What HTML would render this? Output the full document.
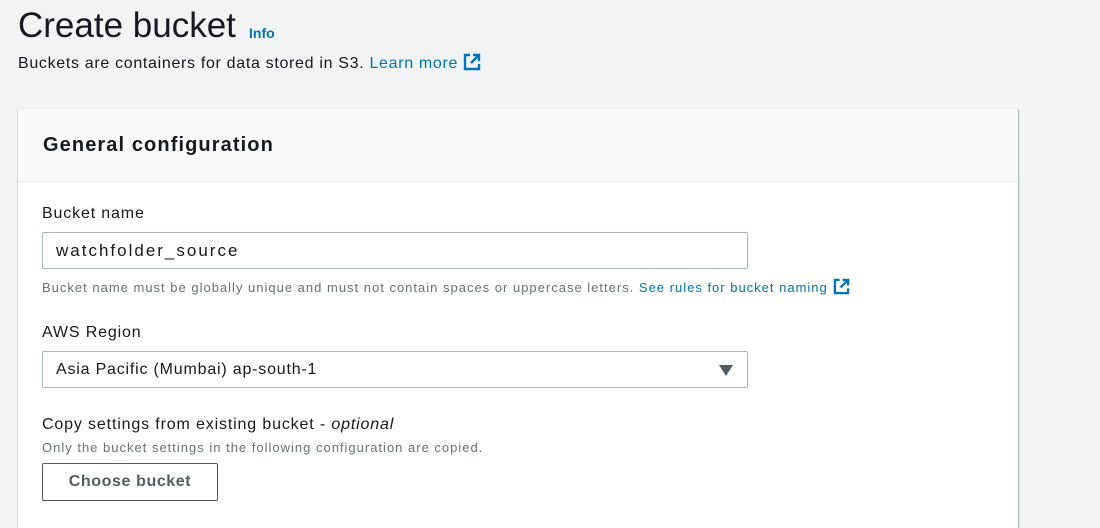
<!DOCTYPE html>
<html><head><meta charset="utf-8"><style>
*{box-sizing:border-box;margin:0;padding:0}
body{width:1100px;height:510px;overflow:hidden;background:#f2f3f3;font-family:"Liberation Sans",Arial,sans-serif;color:#16191f;position:relative}
.abs{position:absolute;white-space:nowrap}
a{color:#0073bb;text-decoration:none}
.card{position:absolute;left:17px;top:108px;width:1001px;height:420px;background:#fff;border-left:1px solid #d5dbdb;border-top:1px solid #eaeded;box-shadow:1px 1px 1px rgba(0,28,36,.3)}
.hd{height:73px;background:#fafafa;border-bottom:1px solid #eaeded}
.inp{position:absolute;left:42px;width:706px;height:37px;border:1px solid #aab7b8;border-radius:2px;background:#fff;font-size:16px;padding-left:13px;line-height:35px;letter-spacing:0.8px}
.hint{font-size:13px;color:#687078;letter-spacing:1px}
.t16{font-size:16px;letter-spacing:0.85px}
</style></head><body>
<div class="abs" style="left:18px;top:4px;font-size:35px;line-height:44px">Create bucket</div>
<div class="abs" style="left:249px;top:25px;font-size:14px;font-weight:bold;color:#0073bb">Info</div>
<div class="abs t16" style="left:18px;top:53px;line-height:20px;letter-spacing:0.68px">Buckets are containers for data stored in S3. <a>Learn more</a>
<svg width="18" height="18" viewBox="0 0 18 18" style="vertical-align:-3px;margin-left:0px"><path d="M7 2H2v14h14v-5" fill="none" stroke="#0073bb" stroke-width="2.4"/><path d="M10 2h6v6M16 2L8 10" fill="none" stroke="#0073bb" stroke-width="2.4"/></svg></div>
<div class="card"><div class="hd"></div></div>
<div class="abs" style="left:43px;top:133px;font-size:20px;font-weight:bold;line-height:24px;letter-spacing:1.1px">General configuration</div>
<div class="abs t16" style="left:42px;top:205px">Bucket name</div>
<div class="inp" style="top:232px"><span style="font-size:17px;letter-spacing:2px">watchfolder_source</span></div>
<div class="abs hint" style="left:42px;top:278px">Bucket name must be globally unique and must not contain spaces or uppercase letters. <a>See rules for bucket naming</a>
<svg width="17" height="17" viewBox="0 0 18 18" style="vertical-align:-3px;margin-left:1px"><path d="M7 2H2v14h14v-5" fill="none" stroke="#0073bb" stroke-width="2.4"/><path d="M10 2h6v6M16 2L8 10" fill="none" stroke="#0073bb" stroke-width="2.4"/></svg></div>
<div class="abs t16" style="left:42px;top:324px">AWS Region</div>
<div class="inp" style="top:351px">Asia Pacific (Mumbai) ap-south-1
<svg width="14" height="12" style="position:absolute;right:14px;top:12px"><path d="M0 1h14L7 12z" fill="#545b64"/></svg></div>
<div class="abs t16" style="left:42px;top:416px;letter-spacing:0.85px">Copy settings from existing bucket - <i>optional</i></div>
<div class="abs hint" style="left:42px;top:440px">Only the bucket settings in the following configuration are copied.</div>
<div class="abs" style="left:42px;top:463px;width:176px;height:38px;border:1px solid #545b64;border-radius:2px;background:#fff;font-size:16px;font-weight:bold;color:#545b64;text-align:center;line-height:36px;letter-spacing:0.6px">Choose bucket</div>
</body></html>
